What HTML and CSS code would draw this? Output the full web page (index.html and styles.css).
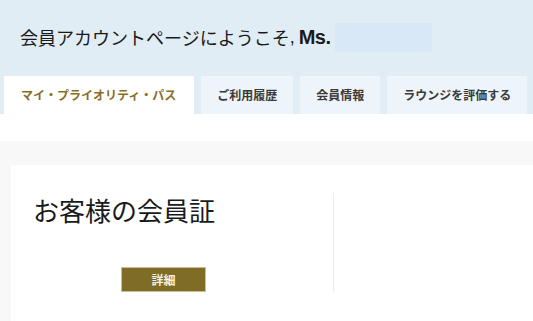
FILE: index.html
```html
<!DOCTYPE html>
<html lang="ja">
<head>
    <meta charset="UTF-8">
    <meta name="viewport" content="width=device-width, initial-scale=1.0">
    <title>会員アカウントページ</title>
    <link rel="stylesheet" href="styles.css">
</head>
<body>
    <header class="account-header">
        <h1 class="welcome">会員アカウントページにようこそ<span class="latin">,</span><span class="latin bold">Ms.</span><span class="name-box"></span></h1>
        <nav class="tabs">
            <a class="tab active" href="#">マイ・プライオリティ・パス</a>
            <a class="tab" href="#">ご利用履歴</a>
            <a class="tab" href="#">会員情報</a>
            <a class="tab" href="#">ラウンジを評価する</a>
        </nav>
    </header>

    <main class="content">
        <section class="card">
            <div class="card-main">
                <h2 class="card-title">お客様の会員証</h2>
                <button class="detail-button">詳細</button>
            </div>
            <div class="card-side"></div>
        </section>
    </main>
</body>
</html>
```

FILE: styles.css
```css
body {
    margin: 0;
    font-family: "Noto Sans CJK JP", "Noto Sans", sans-serif;
    color: #222;
    background-color: #fff;
}
.account-header {
    background-color: #e1edf5;
    padding-top: 23px;
}
.welcome {
    margin: 0 0 24px 20px;
    font-size: 18px;
    font-weight: normal;
    line-height: 29px;
    height: 29px;
    display: flex;
    align-items: center;
    color: #1a1a1a;
}
.latin {
    font-family: "Liberation Sans", Arial, sans-serif;
}
.bold {
    font-weight: bold;
    font-size: 20px;
    margin-left: 4px;
    letter-spacing: -0.5px;
}
.name-box {
    display: inline-block;
    width: 97px;
    height: 29px;
    margin-left: 4px;
    background-color: #d9e8f6;
}
.tabs {
    display: flex;
    gap: 7px;
    padding-left: 4px;
}
.tab {
    height: 38px;
    line-height: 38px;
    padding: 0 16px;
    font-size: 12px;
    font-weight: bold;
    color: #3a3a3a;
    text-decoration: none;
    background-color: #eef5fa;
}
.tab.active {
    background-color: #fff;
    color: #8a6d1e;
    padding: 0 18px 0 17px;
}
.content {
    margin-top: 27px;
    background-color: #f8f8f8;
    padding: 24px 0 0 11px;
}
.card {
    background-color: #fff;
    display: flex;
    padding: 28px 0 29px 22px;
}
.card-main {
    width: 300px;
    border-right: 1px solid #ececec;
    height: 99px;
}
.card-title {
    margin: 0;
    font-size: 26px;
    font-weight: normal;
    line-height: 34px;
    color: #1a1a1a;
}
.detail-button {
    margin: 40px 0 0 88px;
    width: 85px;
    height: 25px;
    padding: 0;
    font-family: "Noto Sans CJK JP", sans-serif;
    font-size: 12px;
    font-weight: bold;
    color: #f4f1e6;
    background-color: #7f6c27;
    border: 1px solid #c9bf95;
    cursor: pointer;
}
```
